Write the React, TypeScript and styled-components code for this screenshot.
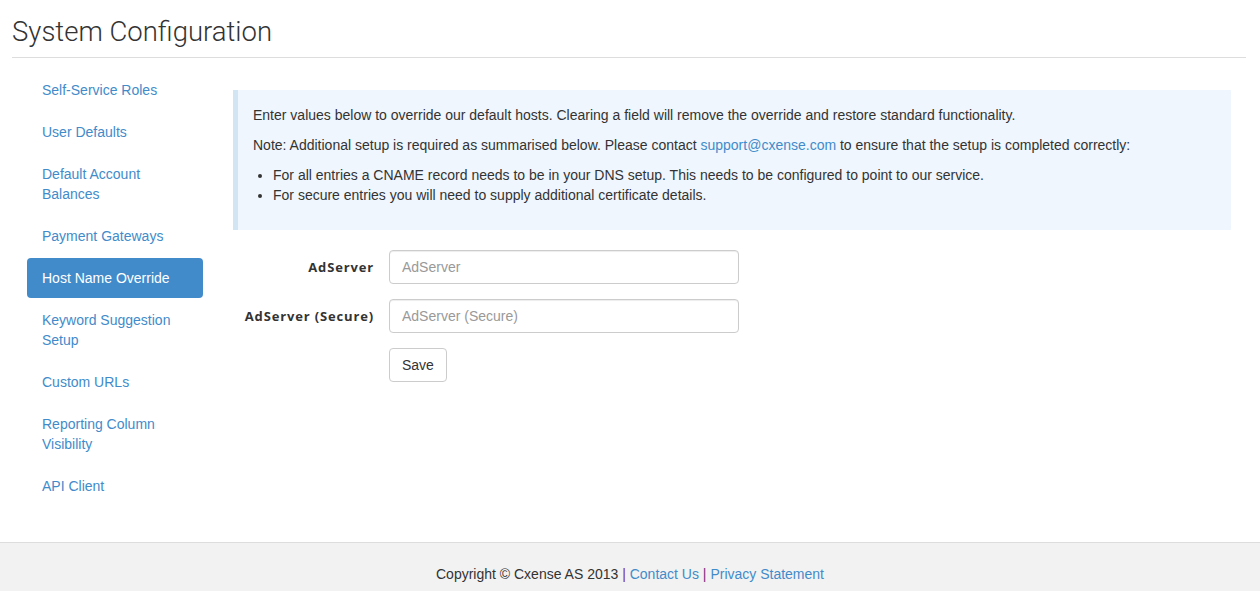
import styled, { createGlobalStyle } from 'styled-components'

const GlobalStyle = createGlobalStyle`
  html, body {
    margin: 0;
    padding: 0;
    background: #fff;
  }
  body {
    font-family: 'Liberation Sans', Arial, sans-serif;
    font-size: 14px;
    line-height: 20px;
    color: #333;
  }
  * {
    box-sizing: border-box;
  }
`

const Page = styled.div`
  display: flex;
  flex-direction: column;
`

const Header = styled.div`
  margin: 0 14px 0 12px;
  padding-top: 12px;
  border-bottom: 1px solid #ddd;
`

const Title = styled.h1`
  margin: 0;
  padding-bottom: 5px;
  font-family: Roboto, 'Liberation Sans', sans-serif;
  font-weight: 300;
  font-size: 27.5px;
  line-height: 40px;
  color: #333;
`

const Body = styled.div`
  display: grid;
  grid-template-columns: 206px 1fr;
  margin: 0 14px 0 12px;
`

const Sidebar = styled.nav`
  display: flex;
  flex-direction: column;
  gap: 2px;
  padding: 12px 15px 0;
`

const NavItem = styled.a<{ $active?: boolean }>`
  display: block;
  padding: 10px 15px;
  border-radius: 4px;
  color: ${p => (p.$active ? '#fff' : '#428bca')};
  background: ${p => (p.$active ? '#428bca' : 'transparent')};
  text-decoration: none;
  cursor: pointer;
`

const Main = styled.div`
  padding: 32px 15px 0;
`

const Alert = styled.div`
  background: #eff6fd;
  border-left: 5px solid #d2e5f3;
  padding: 15px;
  margin-bottom: 20px;

  p {
    margin: 0 0 10px;
  }
  ul {
    margin: 0 0 10px;
    padding-left: 20px;
  }
`

const Link = styled.a`
  color: #428bca;
  text-decoration: none;
`

const Form = styled.form`
  display: grid;
  grid-template-columns: 141px 350px;
  column-gap: 15px;
  row-gap: 15px;
`

const Label = styled.label`
  text-align: right;
  line-height: 34px;
  font-family: 'Open Sans', 'Liberation Sans', sans-serif;
  font-weight: 700;
  font-size: 13px;
  letter-spacing: 0.85px;
  color: #333;
`

const Input = styled.input`
  height: 34px;
  padding: 6px 12px;
  font-family: 'Liberation Sans', Arial, sans-serif;
  font-size: 14px;
  color: #555;
  border: 1px solid #ccc;
  border-radius: 4px;
  box-shadow: inset 0 1px 1px rgba(0, 0, 0, 0.075);

  &::placeholder {
    color: #999;
  }
`

const SaveButton = styled.button`
  grid-column: 2;
  justify-self: start;
  height: 34px;
  padding: 6px 12px;
  font-family: 'Liberation Sans', Arial, sans-serif;
  font-size: 14px;
  color: #333;
  background: #fff;
  border: 1px solid #ccc;
  border-radius: 4px;
  cursor: pointer;
`

const Footer = styled.footer`
  margin-top: 36px;
  border-top: 1px solid #ddd;
  background: #f2f2f2;
  padding: 21px 0 30px;
  text-align: center;
`

const Pipe = styled.span`
  color: #7a2f7e;
`

const navItems = [
  'Self-Service Roles',
  'User Defaults',
  'Default Account Balances',
  'Payment Gateways',
  'Host Name Override',
  'Keyword Suggestion Setup',
  'Custom URLs',
  'Reporting Column Visibility',
  'API Client'
]

export default function App() {
  return (
    <Page>
      <GlobalStyle />
      <Header>
        <Title>System Configuration</Title>
      </Header>
      <Body>
        <Sidebar>
          {navItems.map(item => (
            <NavItem key={item} $active={item === 'Host Name Override'}>
              {item}
            </NavItem>
          ))}
        </Sidebar>
        <Main>
          <Alert>
            <p>
              Enter values below to override our default hosts. Clearing a field will remove the override and
              restore standard functionality.
            </p>
            <p>
              Note: Additional setup is required as summarised below. Please contact{' '}
              <Link>support@cxense.com</Link> to ensure that the setup is completed correctly:
            </p>
            <ul>
              <li>
                For all entries a CNAME record needs to be in your DNS setup. This needs to be configured to
                point to our service.
              </li>
              <li>For secure entries you will need to supply additional certificate details.</li>
            </ul>
          </Alert>
          <Form onSubmit={e => e.preventDefault()}>
            <Label>AdServer</Label>
            <Input placeholder="AdServer" />
            <Label>AdServer (Secure)</Label>
            <Input placeholder="AdServer (Secure)" />
            <SaveButton type="submit">Save</SaveButton>
          </Form>
        </Main>
      </Body>
      <Footer>
        Copyright © Cxense AS 2013 <Pipe>|</Pipe> <Link>Contact Us</Link> <Pipe>|</Pipe>{' '}
        <Link>Privacy Statement</Link>
      </Footer>
    </Page>
  )
}
